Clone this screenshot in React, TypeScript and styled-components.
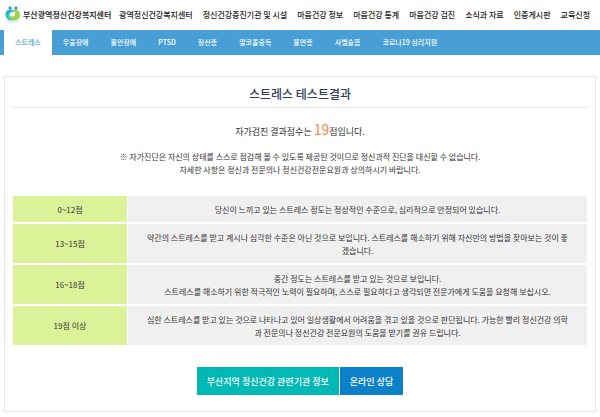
import React from "react";
import styled, { createGlobalStyle } from "styled-components";

const GlobalStyle = createGlobalStyle`
  * { box-sizing: border-box; }
  body {
    margin: 0;
    background: #fff;
    color: #333;
    font-family: "Noto Sans CJK KR", "Noto Sans", sans-serif;
    font-size: 8px;
    line-height: 13px;
    word-break: break-all;
  }
`;

const Header = styled.header`
  display: flex;
  align-items: center;
  justify-content: space-between;
  height: 30px;
  padding: 0 10px 2px 4px;
  white-space: nowrap;
`;

const Logo = styled.a`
  display: flex;
  align-items: center;
  gap: 2px;
  color: #333;
  font-weight: 700;
  text-decoration: none;
`;

const MainNav = styled.nav`
  display: flex;
  gap: 10px;
`;

const MainLink = styled.a`
  color: #222;
  font-weight: 500;
  text-decoration: none;
`;

const TabBar = styled.nav`
  display: flex;
  height: 25px;
  padding-left: 4px;
  background: #479fd5;
`;

const Tab = styled.a<{ $active?: boolean }>`
  display: flex;
  align-items: center;
  padding: 0 11px;
  background: ${(p) => (p.$active ? "#fff" : "transparent")};
  color: ${(p) => (p.$active ? "#479fd5" : "#fff")};
  font-size: 7px;
  font-weight: 500;
  text-decoration: none;
  white-space: nowrap;
`;

const Panel = styled.main`
  margin: 21px 4px 0;
  padding: 0 7px 16px;
  border: 1px solid #e8e8e8;
  text-align: center;
`;

const Title = styled.h1`
  margin: 0;
  padding: 8px 0 5px;
  border-bottom: 1px solid #e8e8e8;
  color: #2e3e5c;
  font-size: 12px;
  font-weight: 500;
  line-height: 17px;
`;

const ScoreLine = styled.p`
  margin: 11px 0 8px;
  font-size: 9px;
  line-height: 20px;
`;

const Score = styled.strong`
  color: #ff7f41;
  font-size: 14px;
  font-weight: 400;
`;

const Notice = styled.p`
  margin: 0 0 18px;
`;

const ResultTable = styled.table`
  width: 100%;
  border-collapse: separate;
  border-spacing: 1px 2px;
  table-layout: fixed;
`;

const Range = styled.th`
  width: 114px;
  background: #dbf299;
  font-weight: 400;
`;

const Description = styled.td`
  padding: 7px 6px 6px;
  background: #f0f0f0;
`;

const Actions = styled.div`
  display: flex;
  justify-content: center;
  gap: 1px;
  margin-top: 20px;
`;

const ActionButton = styled.button<{ $color: string }>`
  height: 28px;
  padding: 0 10px;
  border: 0;
  background: ${(p) => p.$color};
  color: #fff;
  font-family: inherit;
  font-size: 9px;
  font-weight: 500;
`;

const mainLinks = [
  "광역정신건강복지센터",
  "정신건강증진기관 및 시설",
  "마음건강 정보",
  "마음건강 통계",
  "마음건강 검진",
  "소식과 자료",
  "인증게시판",
  "교육신청",
];

const tabs = [
  "스트레스",
  "우울장애",
  "불안장애",
  "PTSD",
  "정신증",
  "알코올중독",
  "불면증",
  "사별슬픔",
  "코로나19 심리지원",
];

const results = [
  { range: "0~12점", lines: ["당신이 느끼고 있는 스트레스 정도는 정상적인 수준으로, 심리적으로 안정되어 있습니다."] },
  {
    range: "13~15점",
    lines: [
      "약간의 스트레스를 받고 계시나 심각한 수준은 아닌 것으로 보입니다. 스트레스를 해소하기 위해 자신만의 방법을 찾아보는 것이 좋",
      "겠습니다.",
    ],
  },
  {
    range: "16~18점",
    lines: [
      "중간 정도는 스트레스를 받고 있는 것으로 보입니다.",
      "스트레스를 해소하기 위한 적극적인 노력이 필요하며, 스스로 필요하다고 생각되면 전문가에게 도움을 요청해 보십시오.",
    ],
  },
  {
    range: "19점 이상",
    lines: [
      "심한 스트레스를 받고 있는 것으로 나타나고 있어 일상생활에서 어려움을 겪고 있을 것으로 판단됩니다. 가능한 빨리 정신건강 의학",
      "과 전문의나 정신건강 전문요원의 도움을 받기를 권유 드립니다.",
    ],
  },
];

function LogoMark() {
  return (
    <svg width="17" height="17" viewBox="0 0 34 34" fill="none" aria-hidden="true">
      <path d="M1 28c9 5 23 5 32-1-7 7-25 8-32 1Z" fill="#8ed5ec" />
      <path d="M18 8C9 5 2 10 3 18c1 9 10 13 18 10-8-1-12-5-10-10 1-5 5-7 10-7Z" fill="#25bbd0" />
      <path d="M18 8c8-3 14 3 14 10 0 8-8 13-15 10-5-2-7-6-5-10 2 3 5 4 8 2 4-3 3-8-2-12Z" fill="#9ed24c" />
      <path d="M11 18c0-5 7-7 10-3 2 4-3 7-6 4" stroke="#d8f0a8" strokeWidth="2" />
      <circle cx="12" cy="4" r="3" fill="#188dcb" />
      <circle cx="24" cy="4" r="3" fill="#188dcb" />
    </svg>
  );
}

export default function App() {
  return (
    <>
      <GlobalStyle />
      <Header>
        <Logo href="#">
          <LogoMark />
          부산광역정신건강복지센터
        </Logo>
        <MainNav>
          {mainLinks.map((label) => (
            <MainLink href="#" key={label}>{label}</MainLink>
          ))}
        </MainNav>
      </Header>
      <TabBar>
        {tabs.map((label, i) => (
          <Tab href="#" key={label} $active={i === 0}>{label}</Tab>
        ))}
      </TabBar>
      <Panel>
        <Title>스트레스 테스트결과</Title>
        <ScoreLine>
          자가검진 결과점수는 <Score>19</Score>점입니다.
        </ScoreLine>
        <Notice>
          ※ 자가진단은 자신의 상태를 스스로 점검해 볼 수 있도록 제공된 것이므로 정신과적 진단을 대신할 수 없습니다.
          <br />
          자세한 사항은 정신과 전문의나 정신건강전문요원과 상의하시기 바랍니다.
        </Notice>
        <ResultTable>
          <tbody>
            {results.map(({ range, lines }) => (
              <tr key={range}>
                <Range scope="row">{range}</Range>
                <Description>
                  {lines.map((line, i) => (
                    <React.Fragment key={line}>
                      {i > 0 && <br />}
                      {line}
                    </React.Fragment>
                  ))}
                </Description>
              </tr>
            ))}
          </tbody>
        </ResultTable>
        <Actions>
          <ActionButton $color="#00b9b4">부산지역 정신건강 관련기관 정보</ActionButton>
          <ActionButton $color="#0b82c8">온라인 상담</ActionButton>
        </Actions>
      </Panel>
    </>
  );
}
